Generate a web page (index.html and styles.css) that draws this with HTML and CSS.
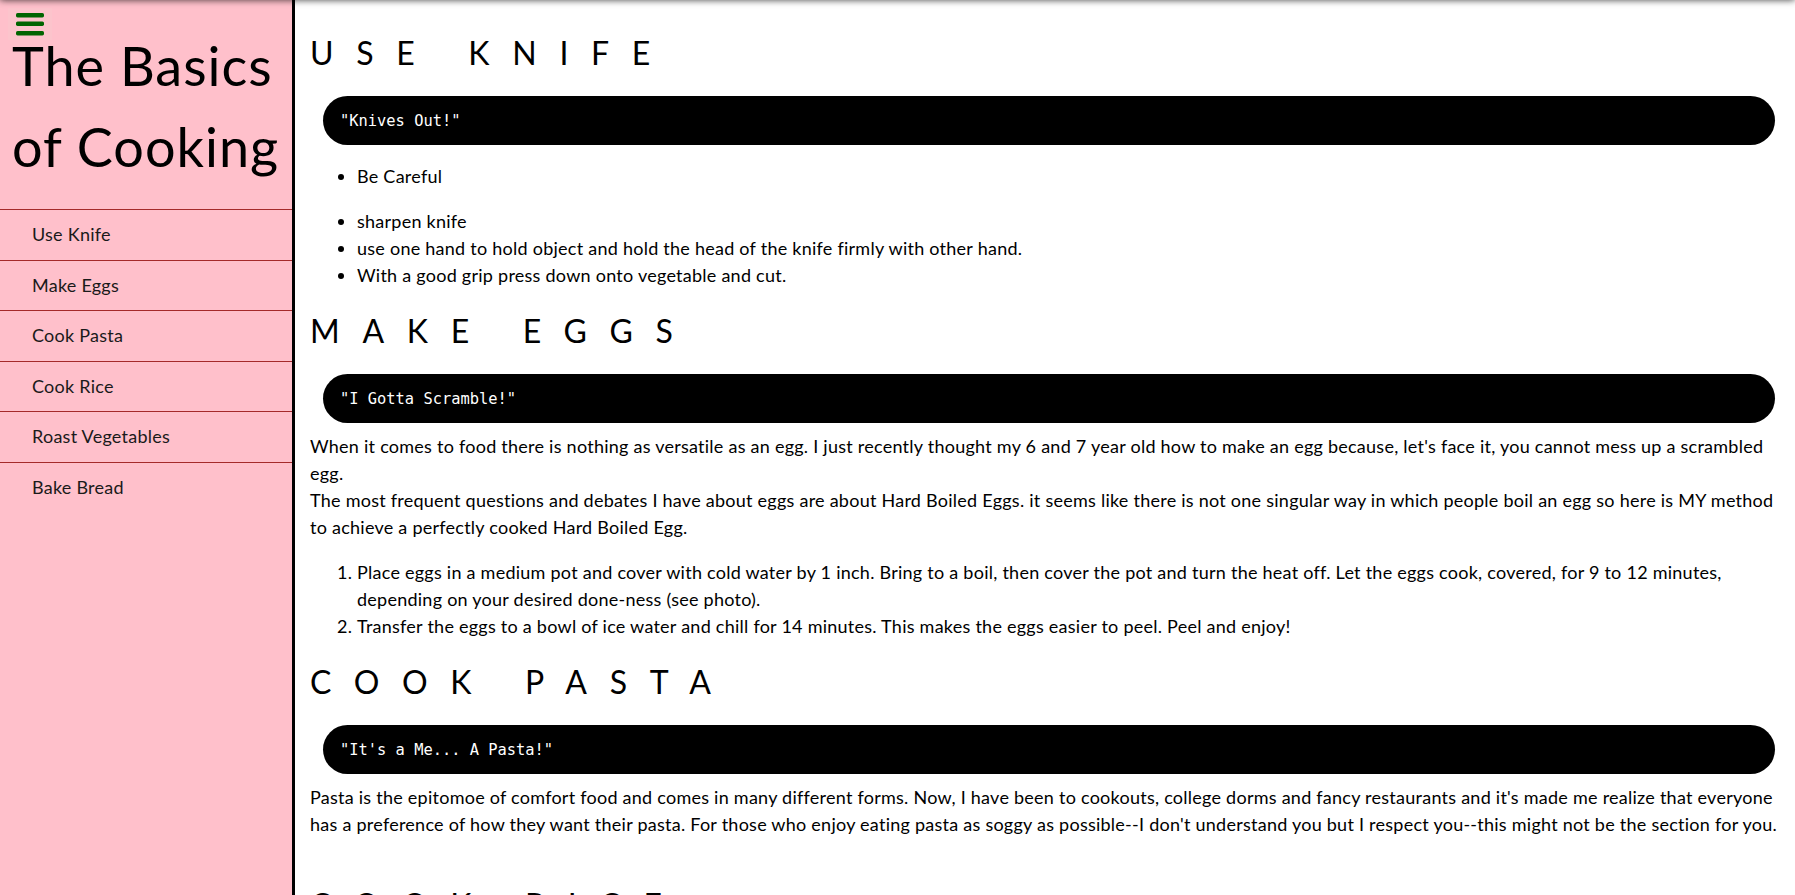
FILE: index.html
```html
<!DOCTYPE html>
<html lang="en">
<head>
<meta charset="utf-8">
<title>The Basics of Cooking</title>
<link rel="stylesheet" href="styles.css">
</head>
<body>
<div class="top-shadow"></div>
<div class="page">
  <nav class="sidebar">
    <button class="menu-btn" aria-label="Menu">
      <svg width="28" height="23" viewBox="0 0 28 23">
        <rect x="0" y="0" width="28" height="4.4" rx="1.6" fill="#006400"/>
        <rect x="0" y="8.5" width="28" height="4.4" rx="1.6" fill="#006400"/>
        <rect x="0" y="18" width="28" height="4.4" rx="1.6" fill="#006400"/>
      </svg>
    </button>
    <h1 class="site-title">The Basics of Cooking</h1>
    <ul class="nav-list">
      <li class="nav-item">Use Knife</li>
      <li class="nav-item">Make Eggs</li>
      <li class="nav-item">Cook Pasta</li>
      <li class="nav-item">Cook Rice</li>
      <li class="nav-item">Roast Vegetables</li>
      <li class="nav-item">Bake Bread</li>
    </ul>
  </nav>
  <main class="content">
    <section class="section">
      <h2 class="section-title">USE KNIFE</h2>
      <div class="quote">"Knives Out!"</div>
      <ul class="list">
        <li>Be Careful</li>
      </ul>
      <ul class="list">
        <li>sharpen knife</li>
        <li>use one hand to hold object and hold the head of the knife firmly with other hand.</li>
        <li>With a good grip press down onto vegetable and cut.</li>
      </ul>
    </section>
    <section class="section">
      <h2 class="section-title">MAKE EGGS</h2>
      <div class="quote">"I Gotta Scramble!"</div>
      <p class="text">When it comes to food there is nothing as versatile as an egg. I just recently thought my 6 and 7 year old how to make an egg because, let's face it, you cannot mess up a scrambled egg.<br>The most frequent questions and debates I have about eggs are about Hard Boiled Eggs. it seems like there is not one singular way in which people boil an egg so here is MY method to achieve a perfectly cooked Hard Boiled Egg.</p>
      <ol class="list">
        <li>Place eggs in a medium pot and cover with cold water by 1 inch. Bring to a boil, then cover the pot and turn the heat off. Let the eggs cook, covered, for 9 to 12 minutes, depending on your desired done-ness (see photo).</li>
        <li>Transfer the eggs to a bowl of ice water and chill for 14 minutes. This makes the eggs easier to peel. Peel and enjoy!</li>
      </ol>
    </section>
    <section class="section section-spaced">
      <h2 class="section-title">COOK PASTA</h2>
      <div class="quote">"It's a Me... A Pasta!"</div>
      <p class="text">Pasta is the epitomoe of comfort food and comes in many different forms. Now, I have been to cookouts, college dorms and fancy restaurants and it's made me realize that everyone has a preference of how they want their pasta. For those who enjoy eating pasta as soggy as possible--I don't understand you but I respect you--this might not be the section for you.</p>
    </section>
    <section class="section">
      <h2 class="section-title">COOK RICE</h2>
    </section>
  </main>
</div>
</body>
</html>
```
FILE: styles.css
```css
html, body {
  margin: 0;
  padding: 0;
  overflow: hidden;
}

body {
  font-family: Lato, "Noto Sans", sans-serif;
  font-size: 18px;
  line-height: 27px;
  letter-spacing: 0.25px;
  color: #000;
  background: #fff;
}

.top-shadow {
  position: fixed;
  top: -10px;
  left: 0;
  right: 0;
  height: 10px;
  box-shadow: 0 0 7px rgba(0, 0, 0, 0.75);
  z-index: 5;
}

.page {
  display: flex;
  min-height: 100vh;
}

.sidebar {
  position: relative;
  flex: 0 0 292px;
  width: 292px;
  background: #ffc0cb;
  border-right: 3px solid #000;
  padding-top: 25px;
}

.menu-btn {
  position: absolute;
  top: 8px;
  left: 8px;
  width: 44px;
  height: 32px;
  padding: 5px 0 0 8px;
  border: none;
  background: #fcc4cc;
  display: flex;
  align-items: flex-start;
  justify-content: flex-start;
  box-sizing: border-box;
}

.menu-btn svg {
  display: block;
}

.site-title {
  margin: 0 0 22px;
  padding-left: 12px;
  font-size: 54px;
  line-height: 81px;
  font-weight: 400;
  letter-spacing: 1px;
}

.nav-list {
  list-style: none;
  margin: 0;
  padding: 0;
}

.nav-item {
  border-top: 1px solid #a52a2a;
  padding: 12px 0 12px 32px;
  line-height: 25.6px;
  font-size: 18px;
  color: #1a1a1a;
}

.content {
  flex: 1;
  min-width: 0;
  padding: 11px 10px 0 15px;
}

.section-title {
  margin: 18px 0 19px;
  font-size: 32px;
  line-height: 48px;
  font-weight: 400;
  letter-spacing: 22.7px;
}

.quote {
  display: flex;
  align-items: center;
  height: 49px;
  margin: 0 10px 10px 13px;
  padding-left: 17px;
  border-radius: 25px;
  background: #000;
  color: #fff;
  font-family: "DejaVu Sans Mono", "Liberation Mono", monospace;
  font-size: 15.4px;
  line-height: 18px;
  letter-spacing: 0;
}

.list {
  margin: 18px 0;
  padding-left: 47px;
}

.text {
  margin: 0;
}

.section-spaced .text {
  margin-bottom: 43px;
}
```
